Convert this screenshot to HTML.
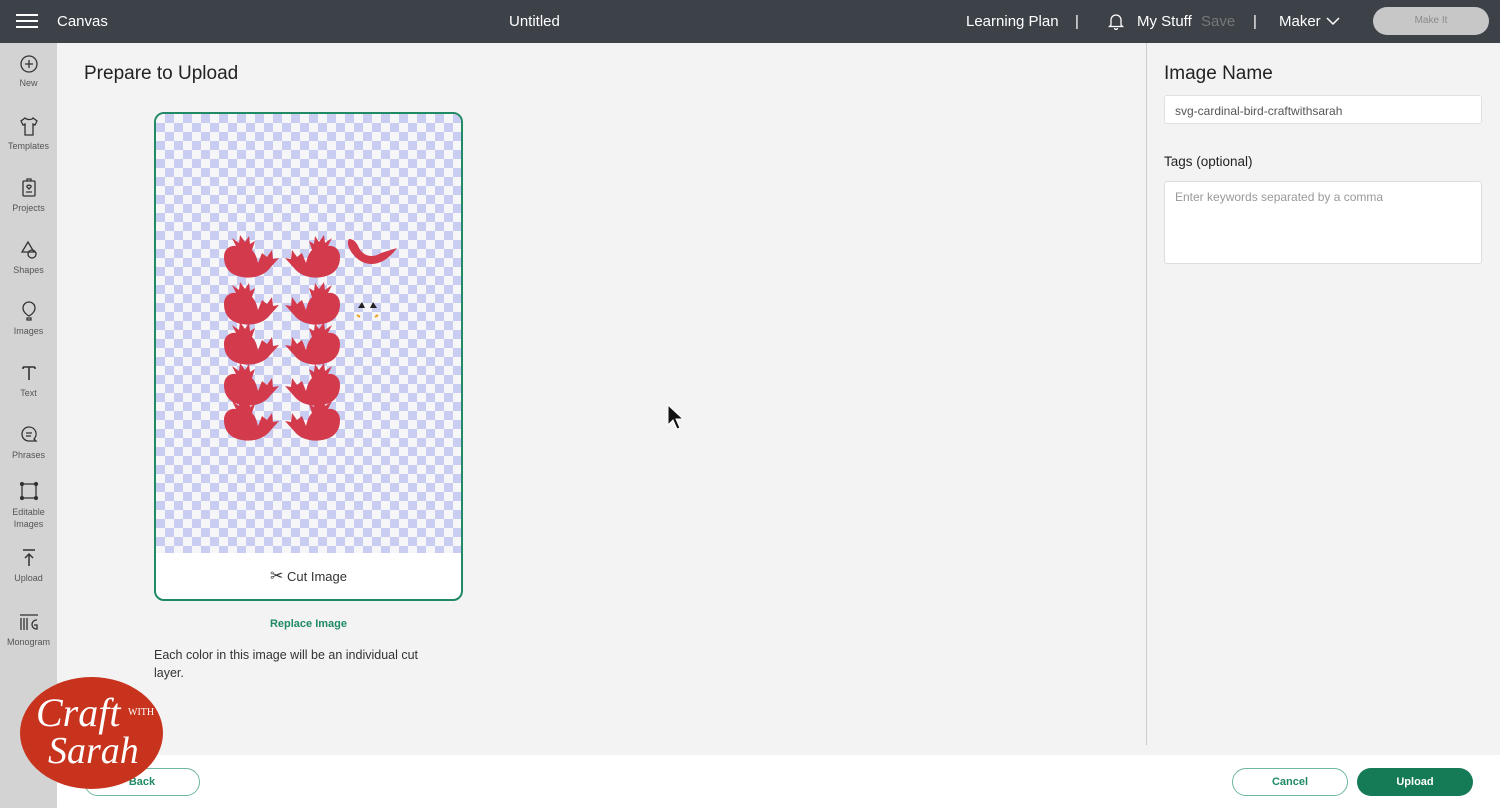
<!DOCTYPE html>
<html><head><meta charset="utf-8"><style>
*{margin:0;padding:0;box-sizing:border-box}
body{width:1500px;height:808px;overflow:hidden;background:#f3f3f3;font-family:"Liberation Sans",sans-serif;position:relative;color:#222}
.hdr{position:absolute;left:0;top:0;width:1500px;height:43px;background:#3d4148;color:#fff;font-size:15px}
.hdr span{position:absolute;top:13px}
.side{position:absolute;left:0;top:43px;width:57px;height:765px;background:#d3d3d3}
.it{position:absolute;left:0;width:57px;text-align:center;font-size:9px;color:#555}
.it svg{display:block;margin:0 auto 4px}
.card{position:absolute;left:154px;top:112px;width:309px;height:489px;border:2px solid #1f8a64;border-radius:10px;overflow:hidden;background:#fff}
.chk{position:absolute;left:0;top:0;width:305px;height:439px;background-color:#f6f6f8;background-image:linear-gradient(45deg,#c9cdf2 25%,transparent 25%,transparent 75%,#c9cdf2 75%),linear-gradient(45deg,#c9cdf2 25%,transparent 25%,transparent 75%,#c9cdf2 75%);background-size:18px 18px;background-position:0 0,9px 9px}
.foot{position:absolute;left:57px;top:755px;width:1443px;height:53px;background:#fff}
.btn{position:absolute;height:28px;border-radius:14px;font-size:11px;font-weight:bold;text-align:center;line-height:26px}
</style></head><body>
<div class="hdr">
<svg style="position:absolute;left:16px;top:13px" width="22" height="16"><path d="M0 2H22M0 8H22M0 14H22" stroke="#fff" stroke-width="2"/></svg>
<span style="left:57px">Canvas</span>
<span style="left:509px">Untitled</span>
<span style="left:966px">Learning Plan</span>
<span style="left:1075px">|</span>
<svg style="position:absolute;left:1107px;top:12px" width="18" height="18" fill="none" stroke="#fff" stroke-width="1.3"><path d="M4 13V8a5 5 0 0110 0v5l1.5 1.5h-13z M7.5 16a1.5 1.5 0 003 0"/></svg>
<span style="left:1137px">My Stuff</span>
<span style="left:1201px;color:#777">Save</span>
<span style="left:1253px">|</span>
<span style="left:1279px">Maker</span>
<svg style="position:absolute;left:1326px;top:17px" width="14" height="9"><path d="M1 1l6 6 6-6" stroke="#fff" stroke-width="1.5" fill="none"/></svg>
<div style="position:absolute;left:1373px;top:7px;width:116px;height:28px;border-radius:14px;background:#c7c7c7;color:#8a8a8a;font-size:10px;text-align:center;line-height:28px">Make It</div>
</div>
<div class="side">
<div class="it" style="top:11px"><svg width="20" height="20" fill="none" stroke="#333" stroke-width="1.3"><circle cx="10" cy="10" r="8"/><path d="M10 6v8M6 10h8"/></svg>New</div>
<div class="it" style="top:72px"><svg width="20" height="22" fill="none" stroke="#333" stroke-width="1.3"><path d="M6 3L2 6l2 4 2-1v11h8V9l2 1 2-4-4-3c-1 2-6 2-8 0z"/></svg>Templates</div>
<div class="it" style="top:134px"><svg width="20" height="22" fill="none" stroke="#333" stroke-width="1.3"><rect x="4" y="4" width="12" height="15" rx="1"/><path d="M8 4V2h4v2M7 15h6M10 12l-2-2a1.3 1.3 0 012-1.5 1.3 1.3 0 012 1.5z"/></svg>Projects</div>
<div class="it" style="top:196px"><svg width="20" height="22" fill="none" stroke="#333" stroke-width="1.3"><path d="M9 3L3 13h12z"/><circle cx="13" cy="15" r="4"/></svg>Shapes</div>
<div class="it" style="top:257px"><svg width="20" height="22" fill="none" stroke="#333" stroke-width="1.3"><path d="M10 2a6 6 0 00-6 6c0 4 4 7 6 8 2-1 6-4 6-8a6 6 0 00-6-6zM8 18h4v2H8z"/></svg>Images</div>
<div class="it" style="top:319px"><svg width="20" height="22" fill="none" stroke="#333" stroke-width="1.6"><path d="M4 5h12M10 5v13M4 5v2M16 5v2"/></svg>Text</div>
<div class="it" style="top:381px"><svg width="20" height="22" fill="none" stroke="#333" stroke-width="1.3"><path d="M10 3a7 7 0 00-7 7c0 4 3 7 7 7h7l-2-2a7 7 0 00-5-12zM7 9h6M7 12h5"/></svg>Phrases</div>
<div class="it" style="top:437px;line-height:12px"><svg width="20" height="22" fill="none" stroke="#333" stroke-width="1.3"><rect x="3" y="4" width="14" height="14"/><circle cx="3" cy="4" r="1.5" fill="#333"/><circle cx="17" cy="4" r="1.5" fill="#333"/><circle cx="3" cy="18" r="1.5" fill="#333"/><circle cx="17" cy="18" r="1.5" fill="#333"/></svg>Editable<br>Images</div>
<div class="it" style="top:504px"><svg width="20" height="22" fill="none" stroke="#333" stroke-width="1.5"><path d="M4 3h12M10 19V7M6 11l4-4 4 4"/></svg>Upload</div>
<div class="it" style="top:568px"><svg width="22" height="22" fill="none" stroke="#333" stroke-width="1.3"><path d="M2 4h18M3 7v12M6 7v12M9 7v12M19 9a4 4 0 10-1 9h1v-4h-3"/></svg>Monogram</div>
</div>
<div style="position:absolute;left:84px;top:63px;font-size:19px;color:#222">Prepare to Upload</div>
<div class="card"><div class="chk">
<svg width="305" height="439" style="position:absolute;left:0;top:0">
<defs><path id="b" d="M2 20C2 12 8 8 14 9L10 1L17 6L18 -2L23 5L27 -1L28 7L33 4L30 13C34 17 35 22 36 26L40 16L45 20L50 13L51 22L57 21L48 31C42 39 30 42 20 40C8 38 2 31 2 20z" fill="#d33a4c"/></defs>
<g fill="#d33a4c">
<use href="#b" x="66" y="123"/><use href="#b" x="66" y="170"/><use href="#b" x="66" y="210"/><use href="#b" x="66" y="251"/><use href="#b" x="66" y="286"/>
<use href="#b" transform="translate(186,123) scale(-1,1)"/><use href="#b" transform="translate(186,170) scale(-1,1)"/><use href="#b" transform="translate(186,210) scale(-1,1)"/><use href="#b" transform="translate(186,251) scale(-1,1)"/><use href="#b" transform="translate(186,286) scale(-1,1)"/>
<path d="M193 125c5 0 8 4 10 9 5 9 14 10 22 5l16-5c-6 8-14 16-26 16-10 0-18-8-22-16-1-3-2-6 0-9z"/>
</g>
<path d="M202 194l4-6 3 6zM214 194l3-6 4 6z" fill="#222"/>
<path d="M201 201l3 2M222 201l-3 2" stroke="#f0a020" stroke-width="2"/>
</svg></div>
<div style="position:absolute;left:0;top:439px;width:305px;height:48px;text-align:center;font-size:13px;color:#333;line-height:48px"><span style="font-size:16px">✂</span> Cut Image</div>
</div>
<div style="position:absolute;left:154px;top:618px;width:309px;text-align:center;font-size:11px;font-weight:bold;color:#1f8a64">Replace Image</div>
<div style="position:absolute;left:154px;top:646px;width:290px;font-size:12.5px;line-height:18px;color:#333">Each color in this image will be an individual cut layer.</div>
<div style="position:absolute;left:1146px;top:43px;width:1px;height:702px;background:#ccc"></div>
<div style="position:absolute;left:1164px;top:63px;font-size:19px;color:#222">Image Name</div>
<div style="position:absolute;left:1164px;top:95px;width:318px;height:29px;background:#fff;border:1px solid #e0e0e0;border-radius:3px;font-size:12px;color:#555;padding:8px 10px">svg-cardinal-bird-craftwithsarah</div>
<div style="position:absolute;left:1164px;top:154px;font-size:13.5px;color:#222">Tags (optional)</div>
<div style="position:absolute;left:1164px;top:181px;width:318px;height:83px;background:#fff;border:1px solid #ddd;border-radius:3px;font-size:12px;color:#999;padding:8px 10px">Enter keywords separated by a comma</div>
<div class="foot"></div>
<div class="btn" style="left:84px;top:768px;width:116px;border:1.5px solid #6fb89c;color:#1f8a64;background:#fff">Back</div>
<div class="btn" style="left:1232px;top:768px;width:116px;border:1.5px solid #6fb89c;color:#1f8a64;background:#fff">Cancel</div>
<div class="btn" style="left:1357px;top:768px;width:116px;background:#157a56;color:#fff;line-height:28px">Upload</div>
<svg style="position:absolute;left:666px;top:403px" width="20" height="28"><path d="M2 2v20l5-5 4 9 3-1-4-9h7z" fill="#111" stroke="#fff" stroke-width="1"/></svg>
<div style="position:absolute;left:20px;top:677px;width:143px;height:112px;border-radius:50%;background:#c8331d;color:#fff;font-family:'Liberation Serif',serif;font-style:italic">
<div style="position:absolute;left:16px;top:12px;font-size:40px">Craft</div>
<div style="position:absolute;left:108px;top:30px;font-size:10px;font-style:normal">WITH</div>
<div style="position:absolute;left:28px;top:52px;font-size:38px">Sarah</div>
</div>
</body></html>
